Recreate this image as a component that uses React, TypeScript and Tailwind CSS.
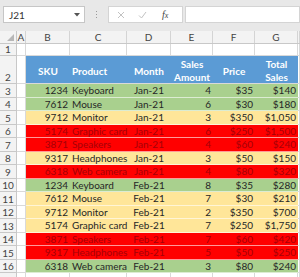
import React from 'react';

type Row = {
  n: number;
  sku: string;
  product: string;
  month: string;
  qty: number;
  price: string;
  total: string;
  tone: 'green' | 'yellow' | 'red';
};

const rows: Row[] = [
  { n: 3, sku: '1234', product: 'Keyboard', month: 'Jan-21', qty: 4, price: '$35', total: '$140', tone: 'green' },
  { n: 4, sku: '7612', product: 'Mouse', month: 'Jan-21', qty: 6, price: '$30', total: '$180', tone: 'green' },
  { n: 5, sku: '9712', product: 'Monitor', month: 'Jan-21', qty: 3, price: '$350', total: '$1,050', tone: 'yellow' },
  { n: 6, sku: '5174', product: 'Graphic card', month: 'Jan-21', qty: 6, price: '$250', total: '$1,500', tone: 'red' },
  { n: 7, sku: '3871', product: 'Speakers', month: 'Jan-21', qty: 4, price: '$60', total: '$240', tone: 'red' },
  { n: 8, sku: '9317', product: 'Headphones', month: 'Jan-21', qty: 3, price: '$50', total: '$150', tone: 'yellow' },
  { n: 9, sku: '6318', product: 'Web camera', month: 'Jan-21', qty: 4, price: '$80', total: '$320', tone: 'red' },
  { n: 10, sku: '1234', product: 'Keyboard', month: 'Feb-21', qty: 8, price: '$35', total: '$280', tone: 'green' },
  { n: 11, sku: '7612', product: 'Mouse', month: 'Feb-21', qty: 7, price: '$30', total: '$210', tone: 'yellow' },
  { n: 12, sku: '9712', product: 'Monitor', month: 'Feb-21', qty: 2, price: '$350', total: '$700', tone: 'yellow' },
  { n: 13, sku: '5174', product: 'Graphic card', month: 'Feb-21', qty: 7, price: '$250', total: '$1,750', tone: 'yellow' },
  { n: 14, sku: '3871', product: 'Speakers', month: 'Feb-21', qty: 7, price: '$60', total: '$420', tone: 'red' },
  { n: 15, sku: '9317', product: 'Headphones', month: 'Feb-21', qty: 5, price: '$50', total: '$250', tone: 'red' },
  { n: 16, sku: '6318', product: 'Web camera', month: 'Feb-21', qty: 3, price: '$80', total: '$240', tone: 'green' },
];

const toneClass = {
  green: 'bg-[#a9d08e] text-[#262626]',
  yellow: 'bg-[#ffe699] text-[#262626]',
  red: 'bg-[#ff0000] text-[#a50008]',
};

const grid = 'grid grid-cols-[17px_9px_44px_57px_44px_42px_42px_43px_1fr]';
const cell = 'border-r border-b border-[#d9d9d9]';
const rowHead = 'bg-[#f3f3f3] border-r border-b border-[#c8c8c8] text-[#444] flex items-end justify-center pb-[1px]';

function FormulaBar() {
  return (
    <div className="h-[31px] bg-[#e8e8e8] flex items-start pt-[6px] pl-[3px] text-[10px] text-[#333]">
      <div className="w-[82px] h-[17px] bg-white border border-[#c6c6c6] flex items-center justify-between pl-[5px] pr-[4px]">
        <span>J21</span>
        <svg width="6" height="4" viewBox="0 0 6 4">
          <path d="M0 0 L6 0 L3 3.5 Z" fill="#555" />
        </svg>
      </div>
      <div className="w-[23px] h-[17px] flex flex-col items-center justify-center gap-[2px]">
        <span className="w-[1px] h-[1px] bg-[#999]" />
        <span className="w-[1px] h-[1px] bg-[#999]" />
        <span className="w-[1px] h-[1px] bg-[#999]" />
      </div>
      <div className="w-[75px] h-[17px] bg-white border border-[#d4d4d4] flex items-center pl-[8px] gap-[13px]">
        <svg width="8" height="8" viewBox="0 0 8 8">
          <path d="M1 1 L7 7 M7 1 L1 7" stroke="#c2c2c2" strokeWidth="1" />
        </svg>
        <svg width="9" height="8" viewBox="0 0 9 8">
          <path d="M1 4.5 L3.5 7 L8 1" stroke="#c2c2c2" strokeWidth="1" fill="none" />
        </svg>
        <span className="italic font-['Liberation_Serif',serif] text-[10px] text-[#444] ml-[2px]">
          f<span className="text-[8px]">x</span>
        </span>
      </div>
      <div className="flex-1 h-[17px] bg-white border border-[#d4d4d4] ml-[2px]" />
    </div>
  );
}

export default function App() {
  return (
    <div className="w-[300px] h-[277px] overflow-hidden bg-white font-['Lato',sans-serif] text-[10px] leading-none">
      <FormulaBar />

      {/* column letters */}
      <div className={`${grid} h-[13px] bg-[#f3f3f3] text-[#444] border-b border-[#c8c8c8]`}>
        <div className="relative border-r border-[#c8c8c8]">
          <svg className="absolute right-[2px] bottom-[2px]" width="7" height="7" viewBox="0 0 7 7">
            <path d="M7 0 L7 7 L0 7 Z" fill="#b7b7b7" />
          </svg>
        </div>
        {['A', 'B', 'C', 'D', 'E', 'F', 'G', ''].map((c, i) => (
          <div key={i} className="flex items-center justify-center border-r border-[#d4d4d4]">
            {c}
          </div>
        ))}
      </div>

      {/* row 1 */}
      <div className={`${grid} h-[12px]`}>
        <div className={rowHead}>1</div>
        {Array.from({ length: 8 }).map((_, i) => (
          <div key={i} className={cell} />
        ))}
      </div>

      {/* row 2 header */}
      <div className={`${grid} h-[28px]`}>
        <div className={rowHead}>2</div>
        <div className={cell} />
        <div className="col-span-6 grid grid-cols-[44px_57px_44px_42px_42px_43px] bg-[#5b9bd5] text-white font-bold border-b border-[#d9d9d9]">
          <div className="flex items-center justify-center pt-[2px]">SKU</div>
          <div className="flex items-center pl-[2px] pt-[2px]">Product</div>
          <div className="flex items-center justify-center pt-[2px]">Month</div>
          <div className="flex flex-col items-center justify-center gap-[3px] pt-[1px]">
            <span>Sales</span>
            <span>Amount</span>
          </div>
          <div className="flex items-center justify-center pt-[2px]">Price</div>
          <div className="flex flex-col items-center justify-center gap-[3px] pt-[1px]">
            <span>Total</span>
            <span>Sales</span>
          </div>
        </div>
        <div className={cell} />
      </div>

      {rows.map((r) => (
        <div key={r.n} className={`${grid} h-[13.5px]`}>
          <div className={`${rowHead} items-center`}>{r.n}</div>
          <div className={cell} />
          <div className={`col-span-6 grid grid-cols-[44px_57px_44px_42px_42px_43px] border-b border-white/60 ${toneClass[r.tone]}`}>
            <div className="flex items-center justify-end pr-[2px]">{r.sku}</div>
            <div className="flex items-center pl-[2px] whitespace-nowrap">{r.product}</div>
            <div className="flex items-center justify-center">{r.month}</div>
            <div className="flex items-center justify-end pr-[2px]">{r.qty}</div>
            <div className="flex items-center justify-end pr-[2px]">{r.price}</div>
            <div className="flex items-center justify-end pr-[2px]">{r.total}</div>
          </div>
          <div className={cell} />
        </div>
      ))}

      {/* row 17, only its top edge shows */}
      <div className={`${grid} h-[13.5px]`}>
        <div className={rowHead} />
        {Array.from({ length: 8 }).map((_, i) => (
          <div key={i} className={cell} />
        ))}
      </div>
    </div>
  );
}
